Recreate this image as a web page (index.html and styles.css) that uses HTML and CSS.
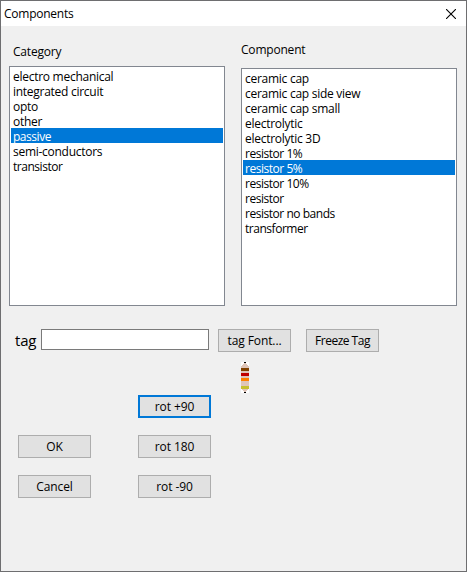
FILE: index.html
```html
<!DOCTYPE html>
<html lang="en">
<head>
<meta charset="utf-8">
<title>Components</title>
<link rel="stylesheet" href="styles.css">
</head>
<body>
<div class="window">
  <header class="titlebar">
    <span class="title">Components</span>
    <svg class="close" width="10" height="10" viewBox="0 0 10 10" aria-label="Close"><path d="M0 0L10 10M10 0L0 10" stroke="#000" stroke-width="1.1"/></svg>
  </header>
  <main class="content">
    <section class="lists">
      <div class="column">
        <label class="heading">Category</label>
        <ul class="listbox category">
          <li>electro mechanical</li>
          <li>integrated circuit</li>
          <li>opto</li>
          <li>other</li>
          <li class="selected tight">passive</li>
          <li>semi-conductors</li>
          <li class="tight">transistor</li>
        </ul>
      </div>
      <div class="column">
        <label class="heading raised">Component</label>
        <ul class="listbox component">
          <li>ceramic cap</li>
          <li>ceramic cap side view</li>
          <li>ceramic cap small</li>
          <li>electrolytic</li>
          <li>electrolytic 3D</li>
          <li class="tight">resistor 1%</li>
          <li class="selected tight">resistor 5%</li>
          <li class="tight">resistor 10%</li>
          <li class="tight">resistor</li>
          <li class="tight">resistor no bands</li>
          <li class="tight">transformer</li>
        </ul>
      </div>
    </section>
    <section class="tag-row">
      <label class="tag-label" for="tag">tag</label>
      <input class="tag-input" id="tag" type="text">
      <button class="button">tag Font...</button>
      <button class="button freeze">Freeze Tag</button>
    </section>
    <div class="preview">
      <svg width="8" height="31" viewBox="0 0 8 31" shape-rendering="crispEdges">
        <rect width="8" height="31" fill="#fff"/>
        <path d="M3 1h2v1h1v1h1v1h1v23h-1v1h-1v1h-1v1h-2v-1h-1v-1h-1v-1h-1v-23h1v-1h1v-1h1z" fill="#dfc5b8"/>
        <path d="M3 0h2v1h-2zM3 30h2v1h-2z" fill="#000"/>
        <path d="M0 6h8v3h-8z" fill="#804000"/>
        <path d="M0 11h8v3h-8z" fill="#c00000"/>
        <path d="M0 16h8v3h-8z" fill="#ff8000"/>
        <path d="M0 24h8v3h-8z" fill="#c8c030"/>
      </svg>
    </div>
    <section class="actions">
      <button class="button focused">rot +90</button>
      <button class="button ok">OK</button>
      <button class="button">rot 180</button>
      <button class="button">Cancel</button>
      <button class="button">rot -90</button>
    </section>
  </main>
</div>
</body>
</html>
```
FILE: styles.css
```css
* { box-sizing: border-box; }
body {
  margin: 0;
  background: #fff;
  color: #000;
  font: 12px/15px "Open Sans", "Noto Sans", sans-serif;
}
.window {
  width: 467px;
  height: 572px;
  border: 1px solid #6e6e70;
  background: #f0f0f0;
}
.titlebar {
  display: flex;
  justify-content: space-between;
  align-items: center;
  height: 25px;
  padding: 0 10px 0 3px;
  background: #fff;
}
.title { letter-spacing: -0.25px; }
.content { padding: 17px 0 0 8px; }
.lists { display: flex; gap: 16px; height: 263px; }
.column { display: flex; flex-direction: column; width: 216px; }
.heading { height: 23px; padding: 1px 0 0 4px; letter-spacing: -0.2px; }
.raised { height: 25px; padding: 0; line-height: 13px; }
.listbox {
  flex: 1;
  margin: 0;
  padding: 1px;
  list-style: none;
  border: 1px solid #828790;
  background: #fff;
}
.listbox li {
  height: 15px;
  padding-left: 2px;
  line-height: 17px;
  letter-spacing: -0.27px;
  white-space: nowrap;
}
.listbox .tight { letter-spacing: -0.47px; }
.listbox .selected { background: #0078d7; color: #fff; }
.tag-row { display: flex; margin-top: 23px; height: 23px; }
.tag-label { width: 32px; padding-left: 6px; font-size: 15px; line-height: 22px; letter-spacing: -0.2px; }
.tag-input {
  width: 168px;
  height: 21px;
  margin-right: 9px;
  border: 1px solid #7a7a7a;
  background: #fff;
}
.button {
  width: 73px;
  height: 23px;
  padding: 0;
  border: 1px solid #adadad;
  background: #e1e1e1;
  color: #000;
  font: inherit;
  letter-spacing: -0.1px;
  text-align: center;
  white-space: nowrap;
}
.freeze { margin-left: 15px; letter-spacing: -0.5px; }
.focused { border: 2px solid #0078d7; grid-column: 2; }
.preview { height: 31px; margin: 10px 0 2px 232px; }
.preview svg { display: block; }
.actions {
  display: grid;
  grid-template-columns: 73px 73px;
  gap: 17px 47px;
  padding-left: 9px;
}
```
